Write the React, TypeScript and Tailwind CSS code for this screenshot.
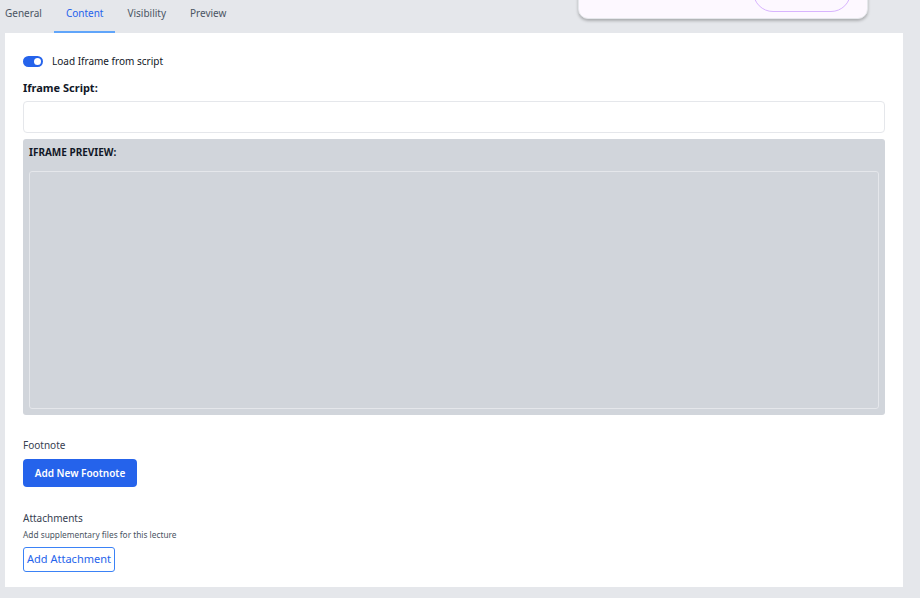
import React from "react";

export default function App() {
  const font = { fontFamily: '"Noto Sans", "Open Sans", Arial, sans-serif' };
  return (
    <div className="relative h-[598px] w-[920px] overflow-hidden bg-[#e5e7eb]" style={font}>
      {/* tabs */}
      <div className="ml-[-7px] flex h-[33px] items-start">
        <div className="flex h-[33px] items-start px-3 pt-[6px] text-[10px] text-[#4b5563]">General</div>
        <div className="flex h-[33px] items-start border-b-2 border-[#60a5fa] px-3 pt-[6px] text-[10px] text-[#2563eb]">Content</div>
        <div className="flex h-[33px] items-start px-3 pt-[6px] text-[10px] text-[#4b5563]">Visibility</div>
        <div className="flex h-[33px] items-start px-3 pt-[6px] text-[10px] text-[#4b5563]">Preview</div>
      </div>

      {/* floating card */}
      <div className="absolute left-[578px] top-[-40px] h-[59px] w-[290px] rounded-[10px] border border-[#e5e7eb] bg-[#fdf8ff] shadow-[0_2px_3px_rgba(0,0,0,0.25)]">
        <div className="absolute bottom-[6px] right-[16px] h-[40px] w-[98px] rounded-full border border-[#d8b4fe]" />
      </div>

      {/* panel */}
      <div className="ml-[5px] flex h-[554px] w-[898px] flex-col bg-white px-[18px]">
        <div className="mt-[22px] flex items-center gap-[9px]">
          <div className="relative h-[11px] w-[20px] rounded-full bg-[#2563eb]">
            <div className="absolute right-[2px] top-[2px] h-[7px] w-[7px] rounded-full bg-white" />
          </div>
          <span className="text-[10px] leading-[12px] text-[#111827]">Load Iframe from script</span>
        </div>

        <div className="mt-[14px] text-[11px] font-bold leading-[14px] text-[#111827]">Iframe Script:</div>

        <div className="mt-[6px] h-[32px] w-full rounded-[4px] border border-[#e5e7eb] bg-white" />

        <div className="mt-[6px] flex h-[276px] w-full flex-col rounded-[3px] bg-[#d1d5db] px-[6px] pb-[6px] pt-[7px]">
          <div className="text-[10px] font-bold leading-[12px] text-[#111827]">IFRAME PREVIEW:</div>
          <div className="mt-[13px] flex-1 rounded-[3px] border border-[#e5e7eb]" />
        </div>

        <div className="mt-[23px] text-[10px] leading-[14px] text-[#374151]">Footnote</div>

        <button className="mt-[7px] flex h-[28px] w-[114px] items-center justify-center rounded-[4px] bg-[#2563eb] text-[10px] font-semibold text-white">
          Add New Footnote
        </button>

        <div className="mt-[24px] text-[10px] leading-[14px] text-[#374151]">Attachments</div>
        <div className="mt-[5px] text-[8.3px] leading-[10px] text-[#4b5563]">Add supplementary files for this lecture</div>

        <button className="mt-[7px] flex h-[25px] w-[92px] items-center justify-center whitespace-nowrap rounded-[3px] border border-[#3b82f6] bg-white text-[11px] text-[#2563eb]">
          Add Attachment
        </button>
      </div>
    </div>
  );
}
